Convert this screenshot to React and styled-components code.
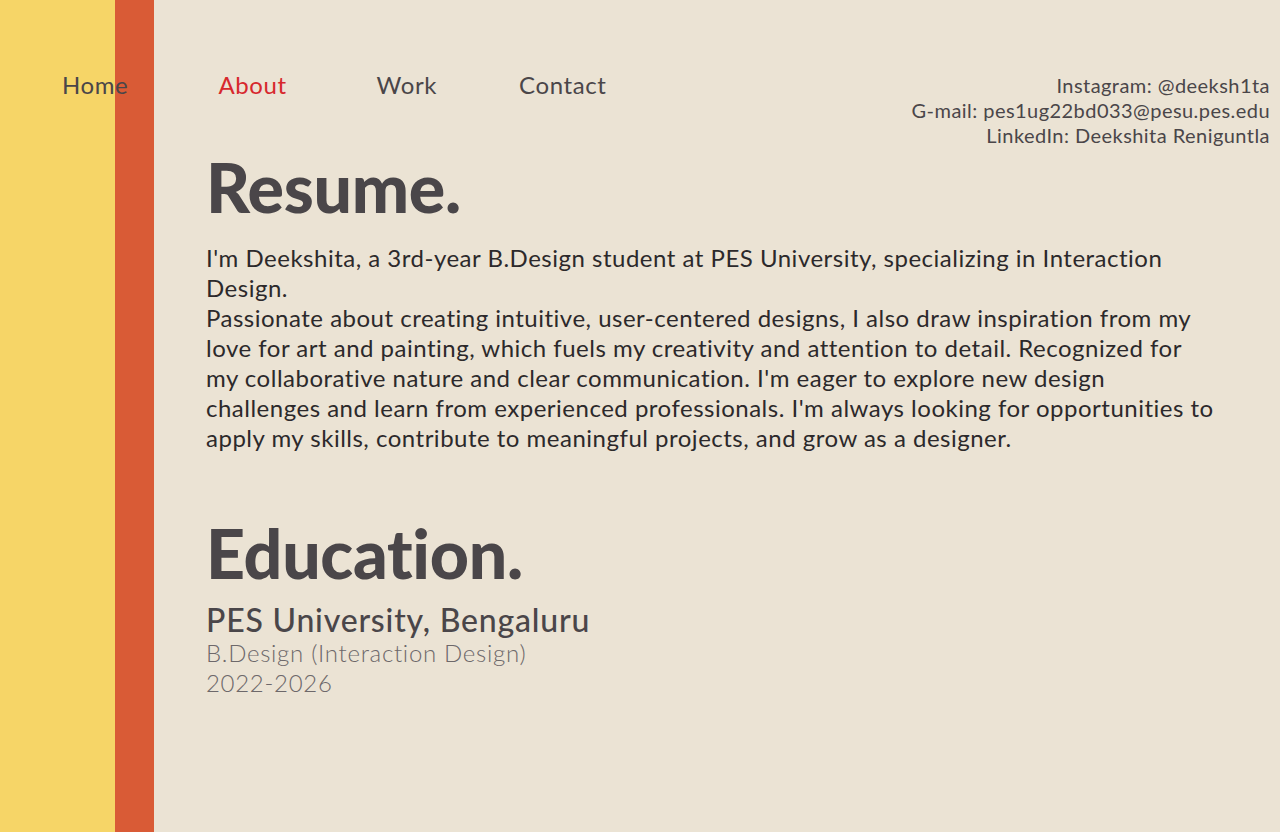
import React from "react";
import styled, { createGlobalStyle } from "styled-components";

const Global = createGlobalStyle`
  html, body { margin: 0; padding: 0; }
  body {
    font-family: "Lato", "Noto Sans", sans-serif;
    color: #4a4649;
    background: linear-gradient(to right, #f6d567 0 115px, #d95b36 115px 154px, #ebe3d4 154px);
    min-height: 100vh;
  }
`;

const Page = styled.div`
  min-height: 832px;
  display: flex;
  flex-direction: column;
`;

const Header = styled.header`
  display: flex;
  justify-content: space-between;
  align-items: flex-start;
  padding: 70px 10px 0 62px;
`;

const Nav = styled.nav`
  display: flex;
  gap: 90px;
`;

const NavLink = styled.a`
  font-size: 24px;
  line-height: 30px;
  letter-spacing: 0.6px;
  color: ${(p) => (p.$active ? "#d7282d" : "#4a4649")};
  text-decoration: none;
  margin-left: ${(p) => p.$shift || "0px"};
`;

const Contacts = styled.div`
  display: flex;
  flex-direction: column;
  align-items: flex-end;
  padding-top: 3px;
  font-size: 20px;
  line-height: 25px;
  letter-spacing: 0.45px;
  color: #4a4649;
`;

const Main = styled.main`
  padding: 0 50px 0 206px;
  display: flex;
  flex-direction: column;
`;

const Heading = styled.h1`
  margin: ${(p) => p.$top} 0 0;
  font-size: 68px;
  line-height: 80px;
  font-weight: 900;
  letter-spacing: -0.3px;
  color: #4a4649;
`;

const Paragraph = styled.p`
  margin: 16px 0 0;
  font-size: 24px;
  line-height: 30px;
  letter-spacing: 0.5px;
  color: #2c292b;
  max-width: 1012px;
`;

const School = styled.div`
  margin-top: 9px;
  font-size: 32px;
  line-height: 36px;
  font-weight: 500;
  letter-spacing: 0.8px;
  color: #4a4649;
`;

const Detail = styled.div`
  font-size: 24px;
  line-height: 30px;
  font-weight: 300;
  letter-spacing: 0.7px;
  color: #6d686a;
`;

export default function App() {
  return (
    <Page>
      <Global />
      <Header>
        <Nav>
          <NavLink href="#">Home</NavLink>
          <NavLink href="#" $active>About</NavLink>
          <NavLink href="#">Work</NavLink>
          <NavLink href="#" $shift="-8px">Contact</NavLink>
        </Nav>
        <Contacts>
          <span>Instagram: @deeksh1ta</span>
          <span>G-mail: pes1ug22bd033@pesu.pes.edu</span>
          <span>LinkedIn: Deekshita Reniguntla</span>
        </Contacts>
      </Header>
      <Main>
        <Heading $top="-1px">Resume.</Heading>
        <Paragraph>
          I'm Deekshita, a 3rd-year B.Design student at PES University, specializing in Interaction Design.
          <br />
          Passionate about creating intuitive, user-centered designs, I also draw inspiration from my love for art and painting, which fuels my creativity and attention to detail. Recognized for my collaborative nature and clear communication. I'm eager to explore new design challenges and learn from experienced professionals. I'm always looking for opportunities to apply my skills, contribute to meaningful projects, and grow as a designer.
        </Paragraph>
        <Heading $top="60px">Education.</Heading>
        <School>PES University, Bengaluru</School>
        <Detail>B.Design (Interaction Design)</Detail>
        <Detail>2022-2026</Detail>
      </Main>
    </Page>
  );
}
